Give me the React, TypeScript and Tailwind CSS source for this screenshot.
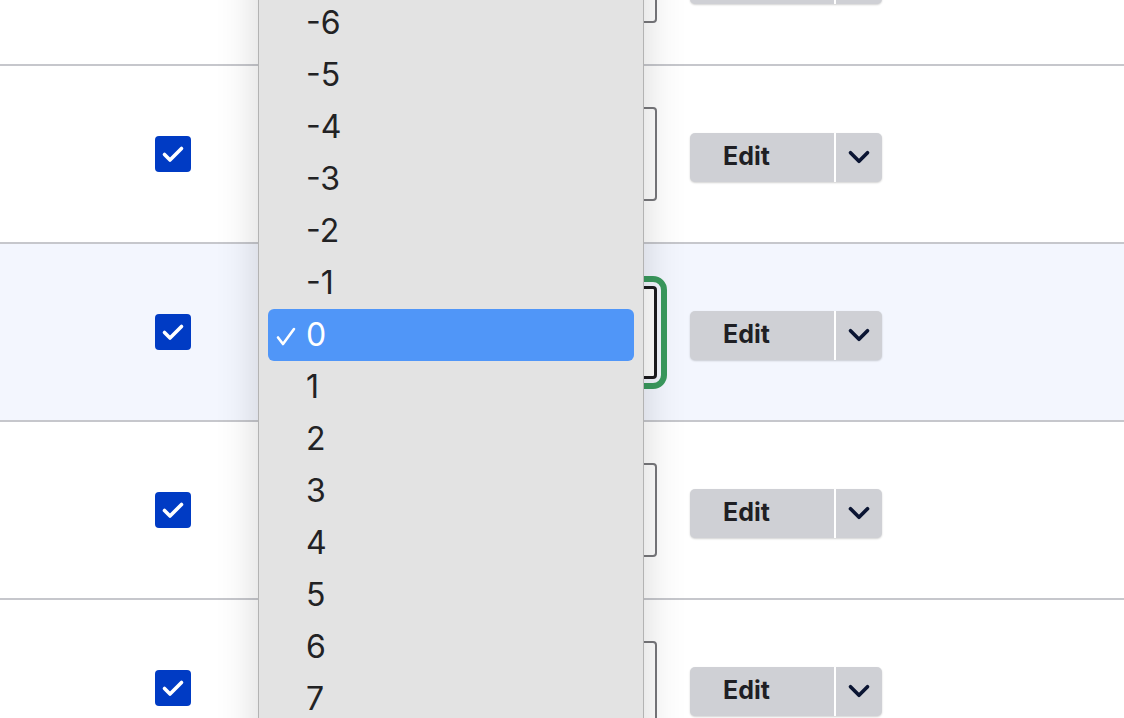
import { ChevronDown } from 'lucide-react'

const rows = [
    { id: 1, focused: false },
    { id: 2, focused: false },
    { id: 3, focused: true },
    { id: 4, focused: false },
    { id: 5, focused: false },
]

const options = [-7, -6, -5, -4, -3, -2, -1, 0, 1, 2, 3, 4, 5, 6, 7, 8]

function Checkbox() {
    return (
        <div className="flex h-9 w-9 shrink-0 items-center justify-center rounded-[4px] bg-[#003bc4]">
            <svg width="36" height="36" viewBox="0 0 36 36" fill="none">
                <path d="M9.5 18.5 L15 24 L26.5 12.5" stroke="white" strokeWidth="3.6" strokeLinecap="round" strokeLinejoin="round" />
            </svg>
        </div>
    )
}

function SplitButton() {
    return (
        <div className="ml-[33px] mt-[6px] flex h-[49px] w-[192px] items-stretch overflow-hidden rounded-[5px] bg-[#cfd0d5] shadow-[0_1px_2px_rgba(0,0,0,0.18)]">
            <div className="flex flex-1 items-center pl-[33px] text-[25px] font-bold text-[#1f1f24]">Edit</div>
            <div className="w-[2px] bg-white" />
            <div className="flex w-[46px] items-center justify-center text-[#0b1533]">
                <ChevronDown size={34} strokeWidth={2.6} />
            </div>
        </div>
    )
}

export default function App() {
    return (
        <div className="relative h-[718px] w-[1124px] overflow-hidden bg-white font-['Inter',sans-serif]">
            <div className="-mt-[112px]">
                {rows.map((row) => (
                    <div
                        key={row.id}
                        className={`flex h-[178px] items-center border-b-2 border-[#c6c7cc] pl-[155px] ${row.focused ? 'bg-[#f3f6fe]' : 'bg-white'}`}
                    >
                        <Checkbox />
                        {row.focused ? (
                            <div className="ml-[79px] h-[93px] w-[387px] rounded-[4px] border-[3px] border-[#1c1c1f] bg-white outline-[6px] outline-offset-[4px] outline-[#3a9a5e] outline-solid" />
                        ) : (
                            <div className="ml-[79px] h-[94px] w-[387px] rounded-[4px] border-2 border-[#78787c] bg-white" />
                        )}
                        <SplitButton />
                    </div>
                ))}
            </div>

            {/* open select menu */}
            <div className="absolute left-[258px] top-[-60px] w-[386px] border border-[#b3b3b3] bg-[#e3e3e3] pt-[4px] shadow-[0_0_40px_rgba(0,0,0,0.16)]">
                {options.map((n) =>
                    n === 0 ? (
                        <div key={n} className="mx-[9px] flex h-[52px] items-center rounded-[6px] bg-[#5096f8] text-white">
                            <svg width="20" height="20" viewBox="0 0 20 20" fill="none" className="ml-[8px] mt-[4px]">
                                <path d="M2 10.5 L7 17 L18 2" stroke="white" strokeWidth="2.6" strokeLinecap="round" strokeLinejoin="round" />
                            </svg>
                            <span className="ml-[10px] text-[32px] leading-none">{n}</span>
                        </div>
                    ) : (
                        <div key={n} className="flex h-[52px] items-center pl-[47px] text-[32px] leading-none text-[#222224]">
                            {n}
                        </div>
                    )
                )}
            </div>
        </div>
    )
}
